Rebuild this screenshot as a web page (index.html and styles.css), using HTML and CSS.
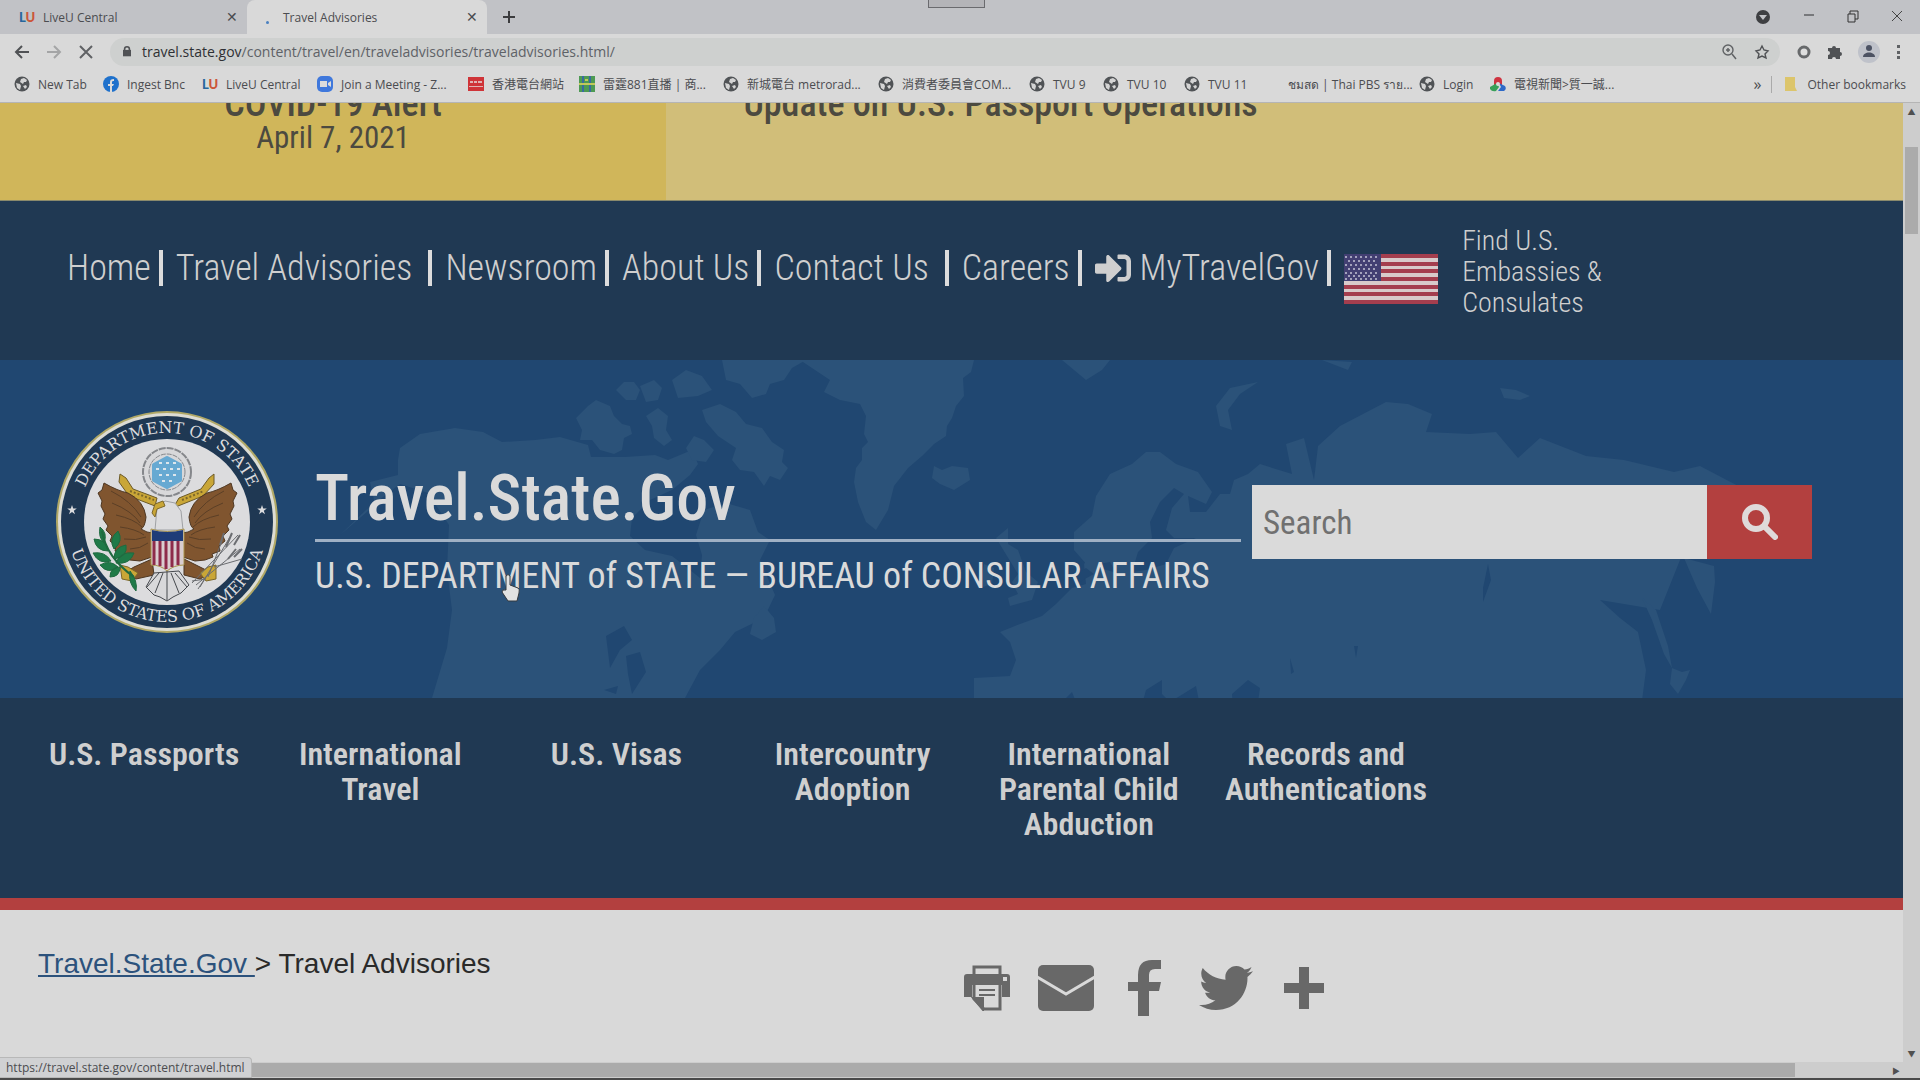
FILE: index.html
```html
<!DOCTYPE html>
<html lang="en">
<head>
    <meta charset="UTF-8">
    <title>Travel Advisories</title>
    <link rel="stylesheet" href="styles.css">
</head>
<body>
    <!-- shared icons -->
    <svg class="sprite" aria-hidden="true">
        <symbol id="globe" viewBox="0 0 16 16">
            <circle cx="8" cy="8" r="7.5" fill="#505356"/>
            <path d="M2 7l4 1 1 2-1 4-3-2zM7 3l3-1 3 2-1 2-2 0-1 2-3-2zM9 10l3-1 1 2-2 2z" fill="#d4d4d4"/>
        </symbol>
    </svg>

    <header class="browser">
        <div class="tab-strip">
            <div class="tab">
                <span class="lu"><b>L</b><i>U</i></span>
                <span class="tab-title">LiveU Central</span>
                <button class="tab-close" aria-label="Close tab">✕</button>
            </div>
            <div class="tab active">
                <span class="spinner"></span>
                <span class="tab-title">Travel Advisories</span>
                <button class="tab-close" aria-label="Close tab">✕</button>
            </div>
            <button class="new-tab" aria-label="New tab"><svg width="14" height="14" viewBox="0 0 14 14"><path d="M7 1v12M1 7h12" stroke="#3c3c3e" stroke-width="2"/></svg></button>
            <div class="window-buttons">
                <button aria-label="Search tabs"><svg width="16" height="16" viewBox="0 0 16 16"><circle cx="8" cy="8" r="7" fill="#3e3f42"/><path d="M4 6h8l-4 5z" fill="#c1c2c6"/></svg></button>
                <button aria-label="Minimize"><svg width="12" height="16" viewBox="0 0 12 16"><path d="M1 6h10" stroke="#77787b" stroke-width="2"/></svg></button>
                <button aria-label="Restore"><svg width="12" height="16" viewBox="0 0 12 16"><path d="M1 5h7v8H1zM3 5V2h8v8H8" fill="none" stroke="#333"/></svg></button>
                <button aria-label="Close"><svg width="12" height="16" viewBox="0 0 12 16"><path d="M1 2l10 10M11 2L1 12" stroke="#444"/></svg></button>
            </div>
            <div class="drag-handle"></div>
        </div>

        <div class="toolbar">
            <button aria-label="Back"><svg width="16" height="16" viewBox="0 0 16 16"><path d="M15 8H2M8 2L2 8l6 6" fill="none" stroke="#505255" stroke-width="2"/></svg></button>
            <button aria-label="Forward"><svg width="16" height="16" viewBox="0 0 16 16"><path d="M1 8h13M8 2l6 6-6 6" fill="none" stroke="#a4a5a6" stroke-width="2"/></svg></button>
            <button aria-label="Stop"><svg width="16" height="16" viewBox="0 0 16 16"><path d="M2 2l12 12M14 2L2 14" stroke="#606265" stroke-width="2"/></svg></button>
            <div class="omnibox">
                <svg width="8" height="13" viewBox="0 0 10 14"><path d="M2 6V4a3 3 0 0 1 6 0v2" fill="none" stroke="#505255" stroke-width="2"/><path d="M0 5h10v8H0z" fill="#505255"/></svg>
                <span class="url"><b>travel.state.gov</b>/content/travel/en/traveladvisories/traveladvisories.html/</span>
                <svg width="16" height="16" viewBox="0 0 16 16"><circle cx="7" cy="6" r="5" fill="none" stroke="#606265" stroke-width="1.4"/><path d="M11 10l4 5M5 6h4M7 4v4" stroke="#606265" stroke-width="1.5"/></svg>
                <svg width="16" height="16" viewBox="0 0 16 16"><path d="M8 2l2 4 4 1-3 3 1 4-4-2-4 2 1-4-3-3 4-1z" fill="none" stroke="#505255" stroke-width="1.4"/></svg>
            </div>
            <div class="extensions">
                <svg width="16" height="16" viewBox="0 0 16 16"><circle cx="8" cy="8" r="5" fill="#dedede" stroke="#67696b" stroke-width="3"/></svg>
                <svg width="16" height="16" viewBox="0 0 16 16"><path d="M1 4h4a2 2 0 1 1 4 0h4v4a2 2 0 1 1 0 4v3H9a2 2 0 0 0-4 0H1v-4a2 2 0 0 0 0-4z" fill="#505255"/></svg>
                <svg width="22" height="22" viewBox="0 0 22 22"><circle cx="11" cy="11" r="11" fill="#bfc2ca"/><circle cx="11" cy="7" r="3" fill="#4c5263"/><path d="M5 16c0-6 12-6 12 0z" fill="#4c5263"/></svg>
                <svg width="6" height="16" viewBox="0 0 6 16"><path d="M2 1h3v3H2zM2 7h3v3H2zM2 12h3v3H2z" fill="#606265"/></svg>
            </div>
        </div>

        <nav class="bookmarks" aria-label="Bookmarks">
            <a href="#"><svg class="fav"><use href="#globe"/></svg>New Tab</a>
            <a href="#"><svg class="fav" viewBox="0 0 16 16"><circle cx="8" cy="8" r="8" fill="#1f71cc"/><path d="M7 16v-6H5V8h2V6c0-2 1-3 4-3v2c-2 0-2 0-2 3h2l-1 2H9v6z" fill="#dcdcdc"/></svg>Ingest Bnc</a>
            <a href="#"><span class="lu"><b>L</b><i>U</i></span>LiveU Central</a>
            <a href="#"><svg class="fav" viewBox="0 0 16 16"><rect width="16" height="16" rx="5" fill="#3f78dc"/><path d="M3 5h7v6H3zM11 7l3-2v6l-3-2z" fill="#dcdcdc"/></svg>Join a Meeting - Z...</a>
            <a href="#"><svg class="fav" viewBox="0 0 16 16"><path d="M0 1h16v14H0z" fill="#cf3438"/><path d="M2 5h3v2H2zM6 5h3v2H6zM10 5h4v2h-4zM1 10h14v1H1z" fill="#e0b4b4"/></svg>香港電台網站</a>
            <a href="#"><svg class="fav" viewBox="0 0 16 16"><path d="M0 0h16v16H0z" fill="#4d9a53"/><path d="M3 0h2v16H3zM10 0h2v16h-2z" fill="#3a6aa0"/><path d="M0 7h16v2H0zM6 3h3v2H6z" fill="#c2c85a"/></svg>雷霆881直播 | 商...</a>
            <a href="#"><svg class="fav"><use href="#globe"/></svg>新城電台 metrorad...</a>
            <a href="#"><svg class="fav"><use href="#globe"/></svg>消費者委員會COM...</a>
            <a href="#"><svg class="fav"><use href="#globe"/></svg>TVU 9</a>
            <a href="#"><svg class="fav"><use href="#globe"/></svg>TVU 10</a>
            <a href="#"><svg class="fav"><use href="#globe"/></svg>TVU 11</a>
            <a href="#"><span class="fav"></span>ชมสด | Thai PBS ราย...</a>
            <a href="#"><svg class="fav"><use href="#globe"/></svg>Login</a>
            <a href="#"><svg class="fav" viewBox="0 0 16 16"><path d="M4 9V5a4 4 0 0 1 8 0v4z" fill="#cf3340"/><path d="M7 7L0 11v2q2 3 6 2l3-4z" fill="#38a058"/><path d="M9 7l6 3q2 3-1 5H8l3-4z" fill="#2d69c8"/><circle cx="8" cy="8" r="2" fill="#dcdcdc"/></svg>電視新聞&gt;質一誠...</a>
            <span class="more">»</span>
            <a href="#" class="other"><svg class="fav" viewBox="0 0 16 16"><path d="M2 1h10v10l2 4H2z" fill="#dcc56c"/></svg>Other bookmarks</a>
        </nav>
    </header>

    <div class="viewport">
        <main class="page">
            <section class="alert">
                <div class="alert-title"><h2>COVID-19 Alert</h2><p>April 7, 2021</p></div>
                <div class="alert-text"><h2>Update on U.S. Passport Operations</h2></div>
            </section>

            <nav class="top-nav" aria-label="Site">
                <a href="#">Home</a>
                <a href="#" class="wide">Travel Advisories</a>
                <a href="#">Newsroom</a>
                <a href="#">About Us</a>
                <a href="#" class="wide">Contact Us</a>
                <a href="#">Careers</a>
                <a href="#"><svg width="36" height="36" viewBox="0 0 512 512" fill="#cfcfcf"><path d="M416 448h-84c-6.600 0-12-5.400-12-12v-40c0-6.600 5.400-12 12-12h84c17.700 0 32-14.300 32-32V160c0-17.700-14.300-32-32-32h-84c-6.600 0-12-5.400-12-12V76c0-6.600 5.400-12 12-12h84c53 0 96 43 96 96v192c0 53-43 96-96 96zm-47-201L201 79c-15-15-41-4.500-41 17v96H24c-13.300 0-24 10.700-24 24v96c0 13.300 10.700 24 24 24h136v96c0 21.500 26 32 41 17l168-168c9.300-9.400 9.300-24.600 0-34z"/></svg>MyTravelGov</a>
                <a href="#" class="embassy">
                    <svg width="94" height="50" viewBox="0 0 94 50">
                        <path d="M0 0h94v50H0z" fill="#d8caca"/>
                        <path d="M0 2h94M0 10h94M0 17h94M0 25h94M0 33h94M0 40h94M0 48h94" stroke="#a43e4e" stroke-width="4"/>
                        <path d="M0 0h37v27H0z" fill="#423f72"/>
                        <path d="M1 3h34M1 11h34M1 19h34M1 25h34" stroke="#a3a2bc" stroke-width="2" stroke-dasharray="2 3"/>
                        <path d="M4 7h30M4 15h30M4 22h30" stroke="#a3a2bc" stroke-width="2" stroke-dasharray="2 3"/>
                    </svg>
                    <span>Find U.S. Embassies &amp; Consulates</span>
                </a>
            </nav>

            <section class="banner">
                <svg class="map" viewBox="0 0 1903 338" preserveAspectRatio="xMidYMid slice" fill="#2b5279" aria-hidden="true">
                    <!-- North America, arctic islands, Greenland -->
                    <path d="M432 338L447 288 452 250 447 210 449 165 428 133 400 124 366 150 340 175 375 145 370 122 398 115 398 100 400 88 420 74 455 68 483 72 502 82 535 80 560 77 588 85 591 97 625 97 655 95 668 100 692 90 698 104 690 115 672 130 650 140 632 158 630 176 645 190 672 196 690 210 700 218 702 195 696 175 704 150 726 143 750 150 758 172 770 180 760 200 775 235 764 258 735 272 720 290 700 310 685 338z"/>
                    <path d="M576 58l12-12 8-6 14 6 4 10 8 8 8 2 2 8-8 4-2 12-8 4-14-4-8-10-12 0 2-10zM616 30l8-8 10 0 6 8-4 10-10 0zM640 26l14-6 8 8-4 12-12 2zM646 56l12-8 10 8-2 14 6 10-8 6-10-8-2-12zM672 20l14-10 16 6 10 14-14 6-20 2zM702 50l18-6 16 8 10 12 16 4 10 14 12 8-2 12 6 6-8 12-10-4-6 10-10-14-14-2-8-10 4-12-18-12-12-14zM722 0h84l-14 8-8 12-14 4-4 10-14 4-12-14-14-4zM694 76l10 4 10 10-8 12-14-2-6-12z"/>
                    <path d="M800 0h174l-3 12-8 6 1 18-8 10-4 12-5 8-1 10-12 8-12 12-14 12-14 18-6 24-12 20-10-8-8-20-4-20 2-14 6-8 0-12 6-6-4-8 2-18-6-12-20-4-16-8 6-12z"/>
                    <path d="M934 106l8 4 10-4 16 2 2 12-16 10-14-6-8-6zM764 246l10 12 2 14-14 8-12-6 4-16zM1062 0h48l-8 10-16 10-12-10zM996 178l12-10 0 16 10 6 8 22 12 10-6 18-22 6-2-8 10-4-6-12 6-8zM984 204l10 4-2 16-12 4z"/>
                    <!-- Europe and Asia -->
                    <path d="M974 338v-20l36-2 6-16-6-18-10-10 20-8 22-8 14-12 16-16 14-4-2-20 8-10 8 14 20 6 26-4 20-6 8-16 22-10-22 0-8-8 6-22 12-14-10-6-14 14-10 20 2 16-14 14-6 20-12 8-10-18-22 4-14-16 0-18 18-16 4-20 14-22 22-10 14-12 14 0 16 12 22 8 14 20-6 12-18-8 2 16 16 0 14-18 10 0 4-14 14-6 12-10 32 10-6-30 18-6 10 42 4-34 22-20 46-24 22 2 24 10-6 18 44 2 26-2 22 26 22-20 46 18 38 4 50 12 26-6 42 22 28 12-1 14-30-10-3 18 8 12-18 12-20-6-22 10-24 60-60-10 20 18 18 14 8 38-6 46-18 10v14h-354l-12-24 4-28-12-8-16 14 2 28 10 18h-38l-4-24-6-30-26 16-8-8 0-14-16 10-6 22 10 28h-54l-16-28-8-20-10 10 14 38h-12l-16-24-20 10-16 14z"/>
                    <path d="M1220 66l-4-20 14-18 28-6-18 12-12 16 4 20zM1322 0l30 2-4 8zM1500 28l16 2 14 6-10 4-16-2zM1684 198l30 8 1 16-4 32-14-26zM1642 238l14 12 12 36 4 22-8-14-12-34zM1672 308l10 4 8-2-4 10-8 14-8-10z"/>
                    <g fill="#204771">
                        <path d="M606 276l18-10 8 14-12 10-10 18zM626 296l14-4 6 20-14 22-4-20zM604 330l14-4-2 8zM1060 222l26-14 8 6-22 12zM1488 204l3 16-8 22 0-14zM1354 286l4 0-2 12zM1290 298l4 14-3 2z"/>
                    </g>
                </svg>

                <svg class="seal" viewBox="0 0 222 222" role="img" aria-label="Department of State seal">
                    <defs>
                        <path id="arc-top" d="M22 111a89 89 0 0 1 178 0"/>
                        <path id="arc-bottom" d="M11 111a100 100 0 0 0 200 0"/>
                        <path id="star" d="M0-5l1.200 3.500h3.600l-3 2.200 1.200 3.500-3-2.200-3 2.200 1.200-3.500-3-2.200h3.600z"/>
                    </defs>
                    <circle cx="111" cy="111" r="111" fill="#b0a866"/>
                    <circle cx="111" cy="111" r="109" fill="#dcdcd4"/>
                    <circle cx="111" cy="111" r="106" fill="#1f3853"/>
                    <circle cx="111" cy="111" r="83" fill="#dcdcde"/>
                    <g class="seal-text">
                        <text><textPath href="#arc-top" startOffset="50%">DEPARTMENT OF STATE</textPath></text>
                        <text><textPath href="#arc-bottom" startOffset="50%">UNITED STATES OF AMERICA</textPath></text>
                    </g>
                    <use href="#star" x="16" y="99" fill="#dcdcde"/>
                    <use href="#star" x="206" y="99" fill="#dcdcde"/>
                    <!-- glory -->
                    <circle cx="111" cy="61" r="24" fill="#d8d8da" stroke="#85878b" stroke-width="2" stroke-dasharray="7 1"/>
                    <circle cx="111" cy="61" r="18" fill="#d8d8da" stroke="#85878b" stroke-dasharray="5 1"/>
                    <path d="M111 47l13 7v15l-13 7-13-7V54z" fill="#67a9d2" stroke="#67a9d2" stroke-width="4" stroke-linejoin="round"/>
                    <path d="M103 52h18M100 58h24M103 64h18M106 70h14" stroke="#dde6ec" stroke-width="2" stroke-dasharray="3 4"/>
                    <!-- scroll -->
                    <path d="M64 63l6 4 7 11 24 9-2 8-26-10-10-14zM158 63l-5 4-8 11-22 9-6 10 30-12 11-12z" fill="#c9a637" stroke="#6c5a28"/>
                    <path d="M74 80l24 9M126 89l22-9" stroke="#7c672a" stroke-width="2" stroke-dasharray="2 2"/>
                    <!-- wings -->
                    <path d="M48 72q14 8 24 10 16 8 18 24-1 10-5 12 6 4 12 4l-1 24-12 4-10-1-8-3 1-3-8-3 1-5-6-5 2-5-6-6 2-4-5-7 2-5-4-8 1-5-4-8 4-3z" fill="#80552f" stroke="#4e3722"/>
                    <path d="M175 72q-14 8-24 10-16 8-18 24 1 10 5 12-6 4-12 4l1 24 12 4 10-1 8-3-1-3 8-3-1-5 6-5-2-5 6-6-2-4 5-7-2-5 4-8-1-5 4-8-4-3z" fill="#80552f" stroke="#4e3722"/>
                    <path d="M55 80q20 10 30 26M56 92q20 8 28 20M60 104q18 4 26 12M64 116q16 2 24 8M68 128q12 2 22-2M74 138q10 0 18-6M168 80q-20 10-30 26M167 92q-20 8-28 20M163 104q-18 4-26 12M159 116q-16 2-24 8M155 128q-12 2-22-2M149 138q-10 0-18-6" fill="none" stroke="#5b3f26"/>
                    <!-- legs -->
                    <path d="M96 148l-18 8-10 6 12 6 18-4zM128 148l16 8 12 6-12 6-16-4z" fill="#80552f" stroke="#4e3722"/>
                    <path d="M64 154l8 2 10 6-6 8-10-2zM160 154l-8 2-8 6 6 8 10-2z" fill="#c9a637" stroke="#7c672a"/>
                    <!-- tail -->
                    <path d="M98 162l-8 14 8 8 6 2 7 4 6-4 8-4 8-8-10-14z" fill="#d8d8da" stroke="#45484d"/>
                    <path d="M111 160v29M107 162l-8 20M115 162l8 20M103 162l-12 14M119 162l12 14" stroke="#45484d"/>
                    <!-- head -->
                    <path d="M99 119l2-22 8-7 10 2 6 8 2 19z" fill="#dcdcde" stroke="#9fa1a4"/>
                    <path d="M99 93l8-3 2 5-8 3-2 8-3-4z" fill="#c9a637" stroke="#7c672a"/>
                    <!-- shield -->
                    <path d="M95 118q16 5 33 0v36q-10 0-17 6-6-6-16-6z" fill="#d9cdd0" stroke="#a8924a"/>
                    <path d="M96 119q15 4 31 0v11H96z" fill="#1f3c78"/>
                    <path d="M98 130v24M104 130v25M110 130v28M116 130v26M122 130v24" stroke="#8e2b4a" stroke-width="3"/>
                    <!-- olive branch -->
                    <path d="M44 116q8 6 4 16-6-6-4-16zM38 128q12 0 14 12-12 0-14-12zM37 142q12-2 18 8-12 4-18-8zM62 120q6 10-4 18-6-10 4-18zM70 134q2 12-12 14 0-12 12-14zM78 142q-4 12-18 10 4-12 18-10zM44 154q10-6 18 2-10 8-18-2zM54 166q0-10 10-10 0 10-10 10zM74 160q8 10 6 20-8-8-6-20z" fill="#1f7a48" stroke="#1f6a40"/>
                    <path d="M46 120q4 26 32 46" fill="none" stroke="#1f6a40" stroke-width="2"/>
                    <!-- arrows -->
                    <path d="M136 172l46-48M140 174l44-36M144 176l30-50M158 156l28-8M152 166l14-36M136 170l14-2M142 178l8-12" stroke="#6b6d71"/>
                    <path d="M164 134l4-12M170 136l6-14M178 134l6-10M178 146l8-8M172 148l8-10" stroke="#6b6d71" stroke-width="2"/>
                </svg>

                <div class="brand">
                    <h1>Travel.State.Gov</h1>
                    <p>U.S. DEPARTMENT of STATE — BUREAU of CONSULAR AFFAIRS</p>
                    <svg class="cursor" width="20" height="30" viewBox="0 0 20 30"><path d="M5 17V3q2-3 4 0v9l8 3q2 1 1 5l-2 8H7L1 19q0-3 4-2z" fill="#e2e2e2" stroke="#33383e"/></svg>
                </div>

                <form class="search">
                    <input type="search" placeholder="Search" aria-label="Search">
                    <button type="submit" aria-label="Submit search"><svg width="36" height="36" viewBox="0 0 36 36"><circle cx="14" cy="14" r="11" fill="none" stroke="#dfdada" stroke-width="6"/><path d="M22 22l11 11" stroke="#dfdada" stroke-width="6" stroke-linecap="round"/></svg></button>
                </form>
            </section>

            <nav class="main-nav" aria-label="Main">
                <a href="#">U.S. Passports</a>
                <a href="#">International Travel</a>
                <a href="#">U.S. Visas</a>
                <a href="#">Intercountry Adoption</a>
                <a href="#">International Parental Child Abduction</a>
                <a href="#">Records and Authentications</a>
            </nav>

            <section class="content">
                <div class="breadcrumb"><a href="#">Travel.State.Gov&nbsp;</a>&gt; Travel Advisories</div>
                <div class="share">
                    <a href="#" aria-label="Print"><svg width="46" height="46" viewBox="0 0 46 46"><path d="M10 10V2h26v8" fill="none" stroke="#686868" stroke-width="3"/><path d="M3 9h40q3 0 3 3v20h-8V20H8v12H0V12q0-3 3-3z" fill="#686868"/><path d="M39 12h4v4h-4z" fill="#d9d9d9"/><path d="M10 20v14l10 10h16V20" fill="none" stroke="#686868" stroke-width="3"/><path d="M15 25h16M15 30h16M9 33h10v12z" fill="#686868" stroke="#686868" stroke-width="2"/></svg></a>
                    <a href="#" aria-label="Email"><svg width="56" height="46" viewBox="0 0 56 46"><rect width="56" height="46" rx="5" fill="#686868"/><path d="M-1 12l29 17 29-17" fill="none" stroke="#d9d9d9" stroke-width="3"/></svg></a>
                    <a href="#" aria-label="Facebook"><svg width="46" height="56" viewBox="0 0 34 56"><path d="M10 56V31H0v-9h10v-7Q10 0 24 0h9v9h-6q-6 0-6 6v7h12l-2 9H21v25z" fill="#686868"/></svg></a>
                    <a href="#" aria-label="Twitter"><svg width="60" height="54" viewBox="0 0 512 512"><path fill="#686868" d="M459.370 151.716c.325 4.548.325 9.097.325 13.645 0 138.720-105.583 298.558-298.558 298.558-59.452 0-114.680-17.219-161.137-47.106 8.447.974 16.568 1.299 25.340 1.299 49.055 0 94.213-16.568 130.274-44.832-46.132-.975-84.792-31.188-98.112-72.772 6.498.974 12.995 1.624 19.818 1.624 9.421 0 18.843-1.300 27.614-3.573-48.081-9.747-84.143-51.980-84.143-102.985v-1.299c13.969 7.797 30.214 12.670 47.431 13.319-28.264-18.843-46.781-51.005-46.781-87.391 0-19.492 5.197-37.360 14.294-52.954 51.655 63.675 129.300 105.258 216.365 109.807-1.624-7.797-2.599-15.918-2.599-24.040 0-57.828 46.782-104.934 104.934-104.934 30.213 0 57.502 12.670 76.670 33.137 23.715-4.548 46.456-13.320 66.599-25.340-7.798 24.366-24.366 44.833-46.132 57.827 21.117-2.273 41.584-8.122 60.426-16.243-14.292 20.791-32.161 39.308-52.628 54.253z"/></svg></a>
                    <a href="#" aria-label="More"><svg width="40" height="42" viewBox="0 0 40 42"><path d="M20 0v42M0 21h40" stroke="#686868" stroke-width="10"/></svg></a>
                </div>
            </section>
        </main>

        <div class="scroll-v"><span class="arrow">▲</span><div class="thumb"></div><span class="arrow">▼</span></div>
    </div>

    <footer class="scroll-h">
        <div class="thumb"></div>
        <span class="arrow">▶</span>
        <div class="status">https://travel.state.gov/content/travel.html</div>
    </footer>
</body>
</html>
```
FILE: styles.css
```css
* {
    box-sizing: border-box;
}
body {
    margin: 0;
    height: 100vh;
    display: flex;
    flex-direction: column;
    overflow: hidden;
    background-color: #d9d9d9;
    font-family: "Open Sans", "Noto Sans CJK TC", sans-serif;
    font-size: 12px;
    color: #4b4c50;
}
h1, h2, p {
    margin: 0;
    font-weight: normal;
}
a {
    color: inherit;
    text-decoration: none;
}
button {
    display: flex;
    align-items: center;
    justify-content: center;
    border: none;
    padding: 0;
    background: none;
    color: inherit;
    cursor: pointer;
}
svg {
    flex: none;
    display: block;
}
.sprite {
    position: absolute;
    width: 0;
    height: 0;
}

/* browser bars */
.browser {
    height: 103px;
    flex: none;
    border-bottom: 1px solid #b5b5b5;
}
.tab-strip {
    position: relative;
    display: flex;
    height: 34px;
    background-color: #c1c2c6;
}
.tab {
    display: flex;
    align-items: center;
    width: 247px;
    padding: 0 8px 0 19px;
    gap: 8px;
}
.tab.active {
    width: 240px;
    background-color: #d9d9d9;
    border-radius: 8px 8px 0 0;
}
.tab-title {
    flex: 1;
}
.tab-close {
    width: 14px;
    font-size: 14px;
}
.lu {
    width: 16px;
    font-family: Lato, sans-serif;
    font-size: 13px;
    font-weight: 900;
    color: #27679c;
}
.lu i {
    font-style: normal;
    color: #cc5638;
}
.spinner {
    width: 3px;
    height: 3px;
    margin: 10px 6px 0 0;
    border-radius: 50%;
    background-color: #4a80c0;
}
.new-tab {
    width: 44px;
}
.window-buttons {
    display: flex;
    gap: 32px;
    margin-left: auto;
    padding-right: 17px;
}
.drag-handle {
    position: absolute;
    left: 928px;
    top: 0;
    width: 57px;
    height: 8px;
    border: 1px solid #6a6a6e;
    border-top: none;
    background-color: #b4b4b8;
}
.toolbar {
    display: flex;
    align-items: center;
    gap: 16px;
    height: 35px;
    padding: 0 19px 0 14px;
}
.omnibox {
    flex: 1;
    display: flex;
    align-items: center;
    gap: 17px;
    height: 28px;
    padding: 0 10px 0 13px;
    border-radius: 14px;
    background-color: #ced0cf;
}
.url {
    flex: 1;
    margin-left: -6px;
    font-size: 14px;
    color: #5e6267;
}
.url b {
    font-weight: normal;
    color: #2e3034;
}
.extensions {
    display: flex;
    align-items: center;
    gap: 15px;
}
.bookmarks {
    display: grid;
    grid-template-columns: 89px 99px 115px 151px 111px 144px 155px 151px 74px 81px 80px 155px 71px 1fr auto auto;
    align-items: center;
    height: 30px;
    padding: 0 14px 0 14px;
    white-space: nowrap;
}
.bookmarks a {
    display: flex;
    align-items: center;
    gap: 8px;
}
.fav {
    width: 16px;
    height: 16px;
}
.more {
    padding-right: 10px;
    font-size: 16px;
}
.bookmarks .other {
    padding-left: 11px;
    border-left: 1px solid #aaa;
}

/* scrolled page */
.viewport {
    flex: 1;
    min-height: 0;
    display: flex;
}
.page {
    flex: 1;
    overflow: hidden;
    font-family: "Roboto Condensed", "Liberation Sans Narrow", Roboto, sans-serif;
    color: #cfcfcf;
}
.alert {
    display: flex;
    height: 98px;
    border-bottom: 1px solid #8a8a6c;
    color: #4c4a40;
    line-height: 33px;
    text-align: center;
}
.alert h2 {
    margin-top: -15px;
    font-size: 36px;
    font-weight: 500;
}
.alert p {
    font-size: 31px;
}
.alert-title {
    width: 35%;
    background-color: #d0b65a;
}
.alert-text {
    flex: 1;
    padding-right: 474px;
    background-color: #d1be79;
}
.alert-text h2 {
    padding-right: 94px;
}
.top-nav {
    display: flex;
    align-items: flex-start;
    gap: 13px;
    height: 159px;
    padding: 24px 0 0 67px;
    background-color: #203953;
    font-size: 36px;
    font-weight: 300;
    line-height: 36px;
}
.top-nav a {
    display: flex;
    gap: 9px;
    margin-top: 25px;
    padding-right: 8px;
    border-right: 4px solid #dcdcdc;
}
.top-nav .wide {
    padding-right: 16px;
}
.top-nav .embassy {
    align-items: center;
    gap: 24px;
    margin: 0;
    border: none;
    font-size: 28px;
    line-height: 31px;
}
.embassy span {
    width: 160px;
}
.embassy svg {
    margin-top: 14px;
}
.banner {
    position: relative;
    display: flex;
    align-items: center;
    height: 338px;
    padding: 0 91px 14px 56px;
    background-color: #204771;
}
.map {
    position: absolute;
    inset: 0;
    width: 100%;
    height: 100%;
}
.seal {
    position: relative;
    width: 222px;
    height: 222px;
}
.seal-text {
    font-family: "DejaVu Serif", serif;
    font-size: 16px;
    text-anchor: middle;
    fill: #dcdcde;
}
.brand {
    position: relative;
    flex: 1;
    margin: 0 11px 0 37px;
    color: #dadada;
}
.brand h1 {
    padding: 28px 0 4px;
    border-bottom: 3px solid #9fb0c4;
    font-size: 64px;
    font-weight: 500;
    line-height: 72px;
}
.brand p {
    font-size: 36px;
    line-height: 68px;
    white-space: nowrap;
}
.cursor {
    position: absolute;
    left: 186px;
    top: 138px;
}
.search {
    position: relative;
    display: flex;
    width: 560px;
    height: 74px;
}
.search input {
    flex: 1;
    min-width: 0;
    padding: 0 11px;
    border: none;
    background-color: #dadada;
    font-family: inherit;
    font-size: 33px;
}
.search input::placeholder {
    color: #707070;
}
.search button {
    width: 105px;
    background-color: #b3403f;
}
.main-nav {
    display: grid;
    grid-template-columns: repeat(6, 1fr);
    height: 212px;
    padding: 39px 458px 0 26px;
    border-bottom: 12px solid #b3403f;
    background-color: #203953;
    font-size: 32px;
    font-weight: 600;
    line-height: 35px;
    text-align: center;
}
.main-nav a {
    padding: 0 18px;
}
.content {
    display: grid;
    grid-template-columns: 926px 1fr;
    padding: 37px 0 0 38px;
}
.breadcrumb {
    font-family: "Liberation Sans", Arial, sans-serif;
    font-size: 28px;
    line-height: 34px;
    color: #2a2a2a;
}
.breadcrumb a {
    color: #2c527c;
    text-decoration: underline;
}
.share {
    display: flex;
    align-items: center;
    gap: 28px;
    height: 82px;
}

/* scrollbars */
.scroll-v {
    display: flex;
    flex-direction: column;
    align-items: center;
    width: 17px;
    background-color: #cdcdcd;
}
.arrow {
    color: #505050;
    font-size: 8px;
    line-height: 17px;
}
.scroll-v .thumb {
    width: 13px;
    height: 87px;
    margin: 27px 0 auto;
    background-color: #ababab;
}
.scroll-h {
    position: relative;
    display: flex;
    align-items: center;
    justify-content: space-between;
    height: 18px;
    flex: none;
    padding-right: 20px;
    border-bottom: 2px solid #4a4a4a;
    background-color: #cdcdcd;
}
.scroll-h .thumb {
    width: 1795px;
    height: 14px;
    background-color: #ababab;
}
.status {
    position: absolute;
    left: 0;
    bottom: 0;
    height: 21px;
    padding: 0 6px;
    border: 1px solid #b8b8b8;
    border-left: none;
    border-radius: 0 4px 0 0;
    background-color: #d0d1d3;
    font-size: 12px;
    line-height: 19px;
}
```
